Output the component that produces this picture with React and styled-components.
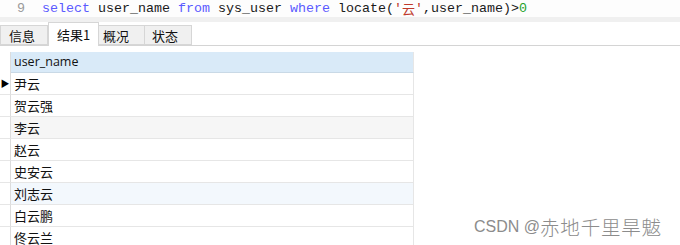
import React from "react";
import styled, { createGlobalStyle } from "styled-components";

const GlobalStyle = createGlobalStyle`
  body {
    margin: 0;
    background: #ffffff;
  }
`;

const Page = styled.div`
  position: relative;
  width: 680px;
  height: 245px;
  overflow: hidden;
  background: #ffffff;
  font-family: "Noto Sans CJK SC", "Liberation Sans", sans-serif;
`;

// SQL editor line
const CodeLine = styled.div`
  display: flex;
  height: 17px;
  align-items: center;
  background: #fdfdfd;
  font-family: "Liberation Mono", monospace;
  font-size: 13.33px;
  white-space: pre;
`;

const LineNo = styled.span`
  width: 42px;
  padding-left: 17px;
  box-sizing: border-box;
  color: #9a9a9a;
`;

const Tok = styled.span`
  color: ${p =>
    p.kind === "kw" ? "#5a5aff" : p.kind === "str" ? "#c0392b" : p.kind === "num" ? "#1fa22a" : "#1a1a1a"};
`;

const CjkTok = styled(Tok)`
  font-family: "Noto Sans CJK SC", sans-serif;
  font-size: 13px;
`;

const Band = styled.div`
  height: 5px;
  background: #f0f0f0;
`;

// Result tabs
const TabBar = styled.div`
  display: flex;
  align-items: flex-end;
  height: 23px;
  border-bottom: 1px solid #d4d4d4;
`;

const Tab = styled.div`
  box-sizing: border-box;
  width: ${p => p.w}px;
  height: ${p => (p.active ? 24 : 20)}px;
  margin-bottom: ${p => (p.active ? -1 : 0)}px;
  padding-left: ${p => p.pad}px;
  display: flex;
  align-items: center;
  font-size: 13px;
  color: #111;
  background: ${p => (p.active ? "#ffffff" : "#f0f0f0")};
  border: 1px solid #d6d6d6;
  border-bottom: ${p => (p.active ? "none" : "1px solid #d6d6d6")};
  border-left: ${p => (p.first || p.active ? "1px solid #d6d6d6" : "none")};
  padding-top: ${p => (p.active ? 0 : 1)}px;
`;

// Result grid
const Grid = styled.div`
  padding-top: 6px;
`;

const Row = styled.div`
  display: grid;
  grid-template-columns: 11px 403px;
  height: ${p => (p.header ? 21 : 22)}px;
`;

const Marker = styled.div`
  box-sizing: border-box;
  border-right: 1px solid #dcdcdc;
  border-bottom: ${p => (p.header ? "none" : "1px solid #e6e6e6")};
  display: flex;
  align-items: center;
  justify-content: center;
  font-size: 9px;
  color: #000;
`;

const Cell = styled.div`
  box-sizing: border-box;
  display: flex;
  align-items: center;
  padding-left: 3px;
  font-size: 13px;
  color: #111;
  background: ${p => p.bg || "#ffffff"};
  border-right: 1px solid #e6e6e6;
  border-bottom: 1px solid ${p => (p.header ? "#c9d9e6" : "#e6e6e6")};
`;

const HeaderCell = styled(Cell)`
  background: #d9eaf8;
  font-family: "Open Sans", "Liberation Sans", sans-serif;
  font-size: 12.5px;
  padding-bottom: 1px;
`;

const Watermark = styled.div`
  position: absolute;
  left: 474px;
  top: 212px;
  display: flex;
  align-items: center;
  font-size: 16px;
  color: #8c8c8c;
  font-family: "Liberation Sans", "Noto Sans CJK SC", sans-serif;
  white-space: pre;
`;

const WatermarkCjk = styled.span`
  font-family: "Noto Sans CJK SC", sans-serif;
  font-size: 19.5px;
  font-weight: 300;
  letter-spacing: 0.8px;
`;

const names = [
  { name: "尹云", current: true },
  { name: "贺云强" },
  { name: "李云", bg: "#f6f6f6" },
  { name: "赵云" },
  { name: "史安云" },
  { name: "刘志云", bg: "#f3f8fd" },
  { name: "白云鹏" },
  { name: "佟云兰" },
];

export default function App() {
  return (
    <Page>
      <GlobalStyle />
      <CodeLine>
        <LineNo>9</LineNo>
        <Tok kind="kw">select</Tok>
        <Tok> user_name </Tok>
        <Tok kind="kw">from</Tok>
        <Tok> sys_user </Tok>
        <Tok kind="kw">where</Tok>
        <Tok> locate(</Tok>
        <Tok kind="str">'</Tok>
        <CjkTok kind="str">云</CjkTok>
        <Tok kind="str">'</Tok>
        <Tok>,user_name)&gt;</Tok>
        <Tok kind="num">0</Tok>
      </CodeLine>
      <Band />
      <TabBar>
        <Tab w={48} pad={8} first>信息</Tab>
        <Tab w={51} pad={8} active>结果1</Tab>
        <Tab w={46} pad={4}>概况</Tab>
        <Tab w={47} pad={7}>状态</Tab>
      </TabBar>
      <Grid>
        <Row header>
          <Marker header />
          <HeaderCell header>user_name</HeaderCell>
        </Row>
        {names.map(r => (
          <Row key={r.name}>
            <Marker>{r.current ? "▶" : ""}</Marker>
            <Cell bg={r.bg}>{r.name}</Cell>
          </Row>
        ))}
      </Grid>
      <Watermark>
        CSDN @<WatermarkCjk>赤地千里旱魃</WatermarkCjk>
      </Watermark>
    </Page>
  );
}
